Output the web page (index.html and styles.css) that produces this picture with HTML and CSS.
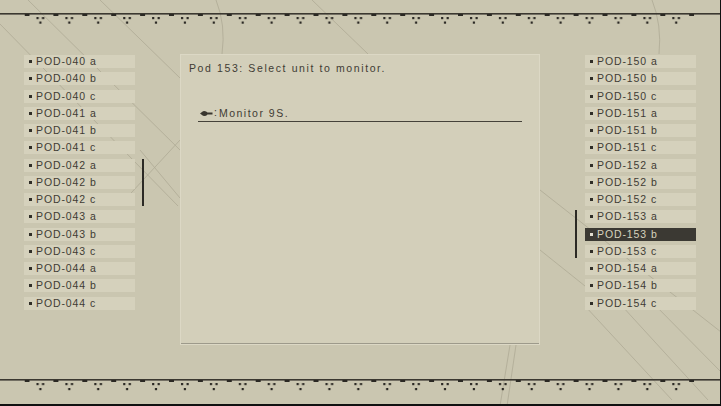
FILE: index.html
```html
<!DOCTYPE html>
<html lang="en">
<head>
    <meta charset="UTF-8">
    <meta name="viewport" content="width=device-width, initial-scale=1.0">
    <title>Pod Monitor</title>
    <link rel="stylesheet" href="styles.css">
</head>
<body>
<div class="screen">
    <!-- faint scratch lines behind everything -->
    <svg class="backdrop" width="721" height="406" viewBox="0 0 721 406">
        <g stroke="#8f8a76" stroke-width="0.8" fill="none" opacity="0.45">
            <line x1="0" y1="24" x2="178" y2="206"/>
            <line x1="28" y1="0" x2="180" y2="150"/>
            <line x1="100" y1="0" x2="180" y2="78"/>
            <line x1="120" y1="205" x2="180" y2="140"/>
            <line x1="140" y1="150" x2="180" y2="198"/>
            <line x1="312" y1="0" x2="368" y2="54"/>
            <line x1="540" y1="190" x2="721" y2="332"/>
            <line x1="540" y1="250" x2="590" y2="290"/>
            <line x1="585" y1="306" x2="672" y2="400"/>
            <line x1="622" y1="306" x2="708" y2="400"/>
            <line x1="650" y1="300" x2="721" y2="372"/>
            <path d="M216 0 Q226 25 222 54"/>
            <path d="M652 0 Q662 25 659 54"/>
            <line x1="510" y1="345" x2="500" y2="406"/>
            <line x1="516" y1="345" x2="507" y2="406"/>
        </g>
    </svg>

    <div class="rail rail-top">
        <svg width="721" height="14" viewBox="0 0 721 14">
            <defs>
                <pattern id="studs-top" x="24.5" y="0" width="28.9" height="14" patternUnits="userSpaceOnUse">
                    <rect x="0" y="1" width="5" height="2"/>
                    <rect x="12" y="4" width="2.2" height="2.2"/>
                    <rect x="17.5" y="4" width="2.2" height="2.2"/>
                    <rect x="14.8" y="8.5" width="2.2" height="2.2"/>
                </pattern>
            </defs>
            <rect x="0" y="0" width="721" height="1.6" fill="#3b3830"/>
            <rect x="24.5" y="0" width="669.7" height="14" fill="url(#studs-top)"/>
        </svg>
    </div>

    <div class="main">
        <ul class="pod-list">
            <li>POD-040 a</li>
            <li>POD-040 b</li>
            <li>POD-040 c</li>
            <li>POD-041 a</li>
            <li>POD-041 b</li>
            <li>POD-041 c</li>
            <li>POD-042 a</li>
            <li>POD-042 b</li>
            <li>POD-042 c</li>
            <li>POD-043 a</li>
            <li>POD-043 b</li>
            <li>POD-043 c</li>
            <li>POD-044 a</li>
            <li>POD-044 b</li>
            <li>POD-044 c</li>
            <span class="scroll-mark left-mark"></span>
        </ul>

        <section class="panel">
            <h1 class="panel-title">Pod 153: Select unit to monitor.</h1>
            <div class="choice">
                <svg class="choice-icon" width="13" height="7" viewBox="0 0 13 7">
                    <path d="M0 3.5 L3 1.2 Q6 0.6 7.5 2.6 L12.5 2.6 L12.5 4.4 L7.5 4.4 Q6 6.4 3 5.8 Z" fill="#3a372f"/>
                </svg>
                <span class="choice-colon">:</span>
                <span class="choice-text">Monitor 9S.</span>
            </div>
        </section>

        <ul class="pod-list">
            <li>POD-150 a</li>
            <li>POD-150 b</li>
            <li>POD-150 c</li>
            <li>POD-151 a</li>
            <li>POD-151 b</li>
            <li>POD-151 c</li>
            <li>POD-152 a</li>
            <li>POD-152 b</li>
            <li>POD-152 c</li>
            <li>POD-153 a</li>
            <li class="selected">POD-153 b</li>
            <li>POD-153 c</li>
            <li>POD-154 a</li>
            <li>POD-154 b</li>
            <li>POD-154 c</li>
            <span class="scroll-mark right-mark"></span>
        </ul>
    </div>

    <div class="rail rail-bottom">
        <svg width="721" height="14" viewBox="0 0 721 14">
            <defs>
                <pattern id="studs-bottom" x="24.5" y="0" width="28.9" height="14" patternUnits="userSpaceOnUse">
                    <rect x="0" y="1" width="5" height="2"/>
                    <rect x="12" y="4" width="2.2" height="2.2"/>
                    <rect x="17.5" y="4" width="2.2" height="2.2"/>
                    <rect x="14.8" y="9" width="2.2" height="2.2"/>
                </pattern>
            </defs>
            <rect x="0" y="0" width="721" height="1.6" fill="#3b3830"/>
            <rect x="24.5" y="0" width="669.7" height="14" fill="url(#studs-bottom)"/>
        </svg>
    </div>
</div>
</body>
</html>
```

FILE: styles.css
```css
body {
    margin: 0;
    background-color: #000;
    font-family: "Liberation Sans", Arial, sans-serif;
    color: #3f3c34;
}

.screen {
    position: relative;
    box-sizing: border-box;
    width: 721px;
    height: 406px;
    display: flex;
    flex-direction: column;
    overflow: hidden;
    background-color: #cac6b0;
    border-right: 1px solid #111;
    border-bottom: 2px solid #111;
}

.backdrop {
    position: absolute;
    top: 0;
    left: 0;
}

.rail {
    position: relative;
    height: 14px;
}

.rail svg {
    display: block;
    fill: #2a2823;
}

.rail-top {
    margin-top: 13px;
}

.rail-bottom {
    margin-top: 34px;
}

.main {
    position: relative;
    display: flex;
    align-items: flex-start;
    height: 291px;
    margin-top: 27px;
    padding-left: 24px;
}

/* side lists */
.pod-list {
    position: relative;
    list-style: none;
    width: 111px;
    margin: 0;
    padding: 1px 0 0;
}

.pod-list li {
    display: flex;
    align-items: center;
    gap: 4px;
    height: 13px;
    margin-bottom: 4.25px;
    padding-left: 5px;
    background-color: #d5d1bc;
    font-size: 10.5px;
    line-height: 13px;
    letter-spacing: 0.9px;
}

.pod-list li::before {
    content: "";
    width: 3px;
    height: 3px;
    background-color: #2f2d27;
}

.pod-list li.selected {
    background-color: #3b3933;
    color: #d6d2bd;
}

.pod-list li.selected::before {
    background-color: #e2ded0;
}

.scroll-mark {
    position: absolute;
    width: 2px;
    height: 47.5px;
    background-color: #2c2a25;
}

.left-mark {
    top: 104.5px;
    left: 118px;
}

.right-mark {
    top: 156.25px;
    left: -10px;
}

/* centre panel */
.panel {
    box-sizing: border-box;
    width: 360px;
    height: 291px;
    margin: 0 45px;
    padding: 7px 4px 5px 8px;
    background-color: #d3cfba;
    border: 1px solid #dcd8c5;
    box-shadow: inset 0 -5px 0 -4px #9d9a8b;
}

.panel-title {
    margin: 0;
    font-size: 10.5px;
    font-weight: normal;
    line-height: 13px;
    letter-spacing: 1.6px;
}

.choice {
    display: flex;
    align-items: center;
    width: 324px;
    height: 14px;
    margin: 31px 0 0 9px;
    padding-bottom: 1px;
    border-bottom: 1.5px solid #45423a;
    font-size: 10.5px;
    letter-spacing: 1.5px;
}

.choice-icon {
    margin-left: 2px;
}

.choice-colon {
    margin: 0 2px 0 1px;
    letter-spacing: 0;
    position: relative;
    top: -1px;
}
```
